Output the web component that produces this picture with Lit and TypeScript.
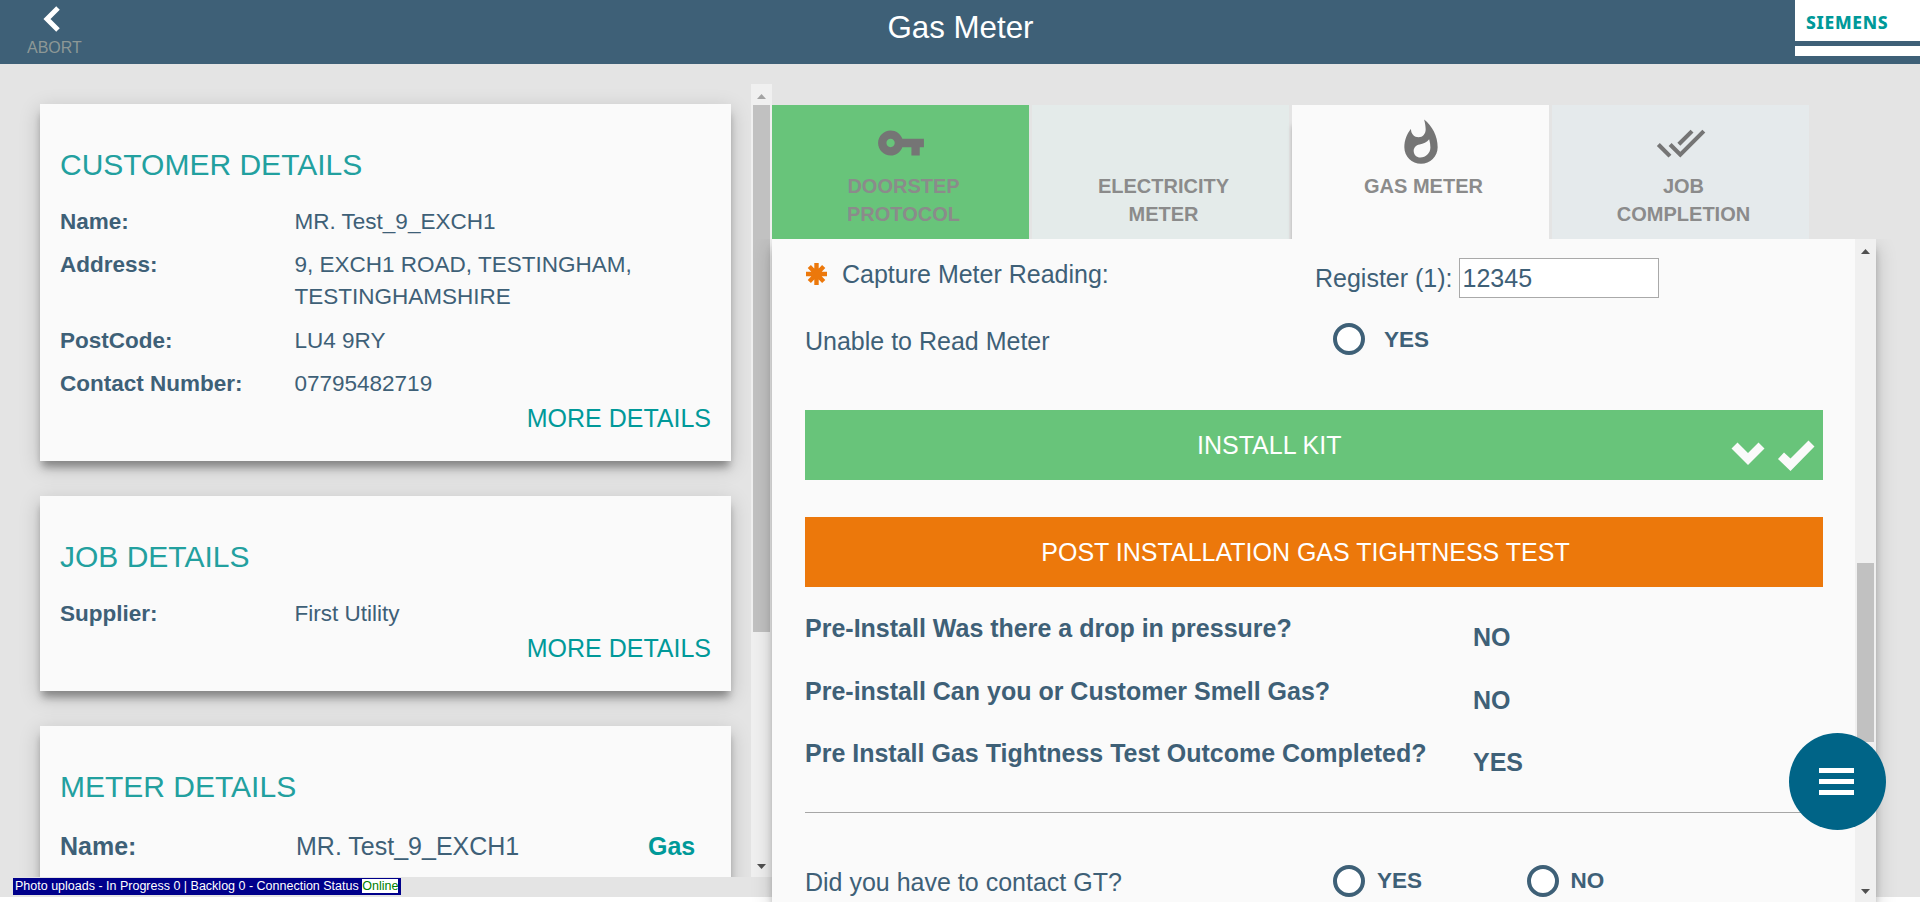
import { LitElement, html, css } from "lit";
import { customElement, property } from "lit/decorators.js";

const ICONS: Record<string, string> = {
  key: "M12.65 10C11.83 7.67 9.61 6 7 6c-3.31 0-6 2.69-6 6s2.69 6 6 6c2.61 0 4.83-1.67 5.65-4H17v4h4v-4h2v-4H12.65zM7 14c-1.1 0-2-.9-2-2s.9-2 2-2 2 .9 2 2-.9 2-2 2z",
  flame: "M13.5.67s.74 2.65.74 4.8c0 2.06-1.35 3.73-3.41 3.73-2.07 0-3.63-1.67-3.63-3.73l.03-.36C5.21 7.51 4 10.62 4 14c0 4.42 3.58 8 8 8s8-3.58 8-8C20 8.61 17.41 3.8 13.5.67zM11.71 19c-1.78 0-3.22-1.4-3.22-3.14 0-1.62 1.05-2.76 2.81-3.12 1.77-.36 3.6-1.21 4.62-2.58.39 1.29.59 2.65.59 4.04 0 2.65-2.15 4.8-4.8 4.8z",
  done: "M18 7l-1.41-1.41-6.34 6.34 1.41 1.41L18 7zm4.24-1.41L11.66 16.17 7.48 12l-1.41 1.41L11.66 19l12-12-1.42-1.41zM.41 13.41L6 19l1.41-1.41L1.83 12 .41 13.41z",
};

@customElement("scroll-rail")
class ScrollRail extends LitElement {
  @property({ type: Number }) start = 0;
  @property({ type: Number }) size = 0;
  @property({ type: Boolean }) top = false;
  static styles = css`
    :host { display: flex; flex-direction: column; width: 21px; background: #f0f0f0; flex: none; }
    .cap { height: 21px; flex: none; display: flex; align-items: center; justify-content: center; }
    .cap:first-child svg { margin-top: 4px; }
    .thumb { margin: 0 2px; background: #c1c1c1; flex: none; }
    .fill { flex: 1; }
    svg { display: block; fill: #505050; }
    .dim svg { fill: #a3a3a3; }
  `;
  render() {
    return html`
      <div class="cap ${this.top ? "dim" : ""}"><svg width="9" height="5" viewBox="0 0 9 5"><path d="M0 5L4.5 0 9 5z" /></svg></div>
      <div class="thumb" style="margin-top:${this.start}px;height:${this.size}px"></div>
      <div class="fill"></div>
      <div class="cap"><svg width="9" height="5" viewBox="0 0 9 5"><path d="M0 0h9L4.5 5z" /></svg></div>
    `;
  }
}

@customElement("detail-card")
class DetailCard extends LitElement {
  @property() heading = "";
  @property({ type: Array }) rows: [string, string][] = [];
  static styles = css`
    :host {
      display: block; background: #fafafa; padding: 41px 20px 27px; color: #3e6077;
      box-shadow: 0 8px 8px -2px rgba(0, 0, 0, 0.33), 0 6px 20px rgba(0, 0, 0, 0.19);
    }
    h2 { margin: 0 0 21px; font-weight: 400; font-size: 30px; line-height: 40px; color: #22a09f; }
    .row { display: grid; grid-template-columns: 234.5px 1fr; font-size: 22.5px; line-height: 32px; margin-bottom: 11.3px; }
    .row:last-of-type { margin-bottom: 0; }
    .row b, .row span { white-space: pre-line; }
    .more { display: block; margin-top: 2px; text-align: right; font-size: 25px; line-height: 32px; color: #009999; }
  `;
  render() {
    return html`
      <h2>${this.heading}</h2>
      ${this.rows.map(([k, v]) => html`<div class="row"><b>${k}</b><span>${v}</span></div>`)}
      <slot><a class="more">MORE DETAILS</a></slot>
    `;
  }
}

@customElement("app-root")
class AppRoot extends LitElement {
  static styles = css`
    :host {
      display: block; position: relative; width: 1920px; height: 902px; overflow: hidden; background: #fff;
      font-family: "Liberation Sans", Arial, sans-serif; color: #3e6077;
    }
    .page { height: 897px; background: #e4e4e4; }
    header { display: grid; grid-template-columns: 125px 1fr 125px; height: 64px; background: #3e6077; }
    .abort { display: flex; flex-direction: column; align-items: flex-start; padding: 6px 0 0 27px; color: #8d9896; font-size: 16px; line-height: 18px; }
    .abort svg { margin: 0 0 7px 16px; display: block; }
    h1 { margin: 0; font-weight: 400; font-size: 31.3px; line-height: 56px; text-align: center; color: #fff; padding-left: 1px; }
    .logo { height: 56px; background: #fff; display: flex; flex-direction: column; }
    .logo span { height: 41px; padding-left: 11px; color: #099; font: 800 17.5px/44px "Noto Sans", sans-serif; letter-spacing: 0.7px; }
    .logo i { height: 5px; background: #3e6077; }
    .body { display: flex; align-items: flex-start; }
    .left { display: flex; width: 772px; height: 793px; margin-top: 20px; overflow: hidden; }
    .cards { flex: 1; display: flex; flex-direction: column; gap: 35px; padding: 20px 20px 0 40px; }
    .cards detail-card { flex: none; }
    .meter { display: grid; grid-template-columns: 236px 352px 1fr; font-size: 25px; line-height: 35px; padding-top: 1px; height: 80px; }
    .meter .gas { color: #099; }
    .right { width: 1104px; padding-top: 41px; }
    .tabs { display: flex; gap: 3px; height: 134px; }
    .tab { width: 257px; background: #e4ebea; display: flex; flex-direction: column; align-items: center; padding-top: 13px; box-sizing: border-box;
      text-align: center; font-weight: 700; font-size: 20px; line-height: 28px; color: #8b8b8b; }
    .tab svg, .tab .blank { width: 50px; height: 50px; margin-bottom: 4px; fill: #757575; flex: none; }
    .tab span { padding-left: 6px; width: 160px; }
    .tab.ok { background: #68c47a; }
    .tab.on { background: #fafafa; box-shadow: 0 20px 5px -1px rgba(0, 0, 0, 0.35); clip-path: inset(0 0 0 -8px); }
    .tab.end { background: #e5eaec; }
    .panel { position: relative; display: flex; height: 663px; background: #fafafa;
      box-shadow: 0 8px 8px -2px rgba(0, 0, 0, 0.3), 0 8px 20px rgba(0, 0, 0, 0.19); clip-path: inset(0 -30px -30px -30px); }
    .form { flex: 1; padding: 19px 32px 0 33px; font-size: 25px; line-height: 32px; }
    .line { display: flex; align-items: flex-start; }
    .reading { height: 61px; }
    .reading .q { display: flex; width: 510px; }
    .reading svg { margin: 5px 15px 0 1px; }
    .reg { line-height: 40px; margin-right: 6px; }
    input { box-sizing: border-box; width: 200px; height: 40px; border: 1px solid #a9a9a9; padding: 0 3px; font: inherit; color: inherit; background: #fff; outline: 0; border-radius: 0; }
    .unable { height: 91px; }
    .unable .q, .gt .q { width: 528px; }
    .unable .q { padding-top: 6px; }
    .radio { box-sizing: border-box; width: 32px; height: 32px; border: 4px solid #3e6077; border-radius: 50%; background: #fff; margin-top: 4px; }
    .lab { font-weight: 700; font-size: 22.5px; }
    .unable .lab { margin: 5px 0 0 19px; }
    .bar { display: flex; align-items: center; justify-content: center; height: 70px; box-sizing: border-box; color: #fff; }
    .bar.green { background: #68c47a; margin-bottom: 37px; padding-left: 392px; justify-content: flex-start; }
    .bar.green svg { margin: 20px 8px 0 auto; }
    .bar.orange { background: #ec780b; padding-right: 17px; }
    .pre { display: grid; grid-template-columns: 668px 1fr; height: 62.5px; font-weight: 700; }
    .pres { padding-top: 25px; }
    .pre span { padding-top: 9px; }
    hr { margin: 12px 0 50px; border: 0; height: 1px; background: #a6a6a6; }
    .gt { height: 34px; }
    .gt .q { padding-top: 3px; }
    .gt .radio { margin-top: 2px; }
    .gt .lab { margin: 2px 0 0 12px; width: 149.5px; }
    .status { position: absolute; left: 13px; top: 878px; height: 17px; box-sizing: border-box; padding: 1px 3px 0 2px; background: #00008b; color: #fff; font-size: 12.5px; line-height: 14px; display: flex; white-space: pre; }
    .status em { font-style: normal; background: #fff; color: #008000; height: 14px; }
    .fab { position: absolute; left: 1788.5px; top: 732.5px; width: 97px; height: 97px; border-radius: 50%; background: #006487; display: flex; flex-direction: column; gap: 6px; align-items: center; justify-content: center; box-sizing: border-box; padding-right: 2px; }
    .fab i { width: 35px; height: 5px; background: #fff; }
  `;

  private tab(label: string, cls: string, icon?: string) {
    return html`<div class="tab ${cls}">
      ${icon ? html`<svg viewBox="0 0 24 24"><path d=${ICONS[icon]} /></svg>` : html`<div class="blank"></div>`}
      <span>${label}</span>
    </div>`;
  }

  private pre(q: string, a: string) {
    return html`<div class="pre">${q}<span>${a}</span></div>`;
  }

  render() {
    return html`
      <div class="page">
        <header>
          <div class="abort">
            <svg width="18" height="26" viewBox="0 0 18 26"><path d="M15 2L4 13l11 11" fill="none" stroke="#fff" stroke-width="5" /></svg>
            ABORT
          </div>
          <h1>Gas Meter</h1>
          <div class="logo"><span>SIEMENS</span><i></i></div>
        </header>
        <div class="body">
          <div class="left">
            <div class="cards">
              <detail-card heading="CUSTOMER DETAILS" .rows=${[
                ["Name:", "MR. Test_9_EXCH1"],
                ["Address:", "9, EXCH1 ROAD, TESTINGHAM,\nTESTINGHAMSHIRE"],
                ["PostCode:", "LU4 9RY"],
                ["Contact Number:", "07795482719"],
              ]}></detail-card>
              <detail-card heading="JOB DETAILS" .rows=${[["Supplier:", "First Utility"]]}></detail-card>
              <detail-card heading="METER DETAILS">
                <div class="meter"><b>Name:</b><span>MR. Test_9_EXCH1</span><b class="gas">Gas</b></div>
              </detail-card>
            </div>
            <scroll-rail top start="0" size="527"></scroll-rail>
          </div>
          <div class="right">
            <div class="tabs">
              ${this.tab("DOORSTEP PROTOCOL", "ok", "key")}
              ${this.tab("ELECTRICITY METER", "")}
              ${this.tab("GAS METER", "on", "flame")}
              ${this.tab("JOB COMPLETION", "end", "done")}
            </div>
            <div class="panel">
              <div class="form">
                <div class="line reading">
                  <div class="q">
                    <svg width="21" height="22" viewBox="-10.5 -11 21 22" stroke="#ec780b" stroke-width="4.4">
                      <path d="M0-11V11M-10.5 0H10.5M-7.2-7.6L7.2 7.6M7.2-7.6L-7.2 7.6" />
                    </svg>
                    Capture Meter Reading:
                  </div>
                  <span class="reg">Register (1):</span><input .value=${"12345"} />
                </div>
                <div class="line unable">
                  <div class="q">Unable to Read Meter</div>
                  <div class="radio"></div><span class="lab">YES</span>
                </div>
                <div class="bar green">
                  INSTALL KIT
                  <svg width="84" height="32" viewBox="0 0 84 32" fill="#fafafa">
                    <path d="M0.5 9.5l6-6 10.500 10.500 10.500-10.500 6 6L17 26z" />
                    <path d="M47 20l6-6.500 6.500 6L77.500 1.500l6 6L59.500 32z" />
                  </svg>
                </div>
                <div class="bar orange">POST INSTALLATION GAS TIGHTNESS TEST</div>
                <div class="pres">
                  ${this.pre("Pre-Install Was there a drop in pressure?", "NO")}
                  ${this.pre("Pre-install Can you or Customer Smell Gas?", "NO")}
                  ${this.pre("Pre Install Gas Tightness Test Outcome Completed?", "YES")}
                </div>
                <hr />
                <div class="line gt">
                  <div class="q">Did you have to contact GT?</div>
                  <div class="radio"></div><span class="lab">YES</span>
                  <div class="radio"></div><span class="lab">NO</span>
                </div>
              </div>
              <scroll-rail start="303" size="179"></scroll-rail>
            </div>
          </div>
        </div>
      </div>
      <div class="status">Photo uploads - In Progress 0 | Backlog 0 - Connection Status <em>Online</em></div>
      <div class="fab"><i></i><i></i><i></i></div>
    `;
  }
}
